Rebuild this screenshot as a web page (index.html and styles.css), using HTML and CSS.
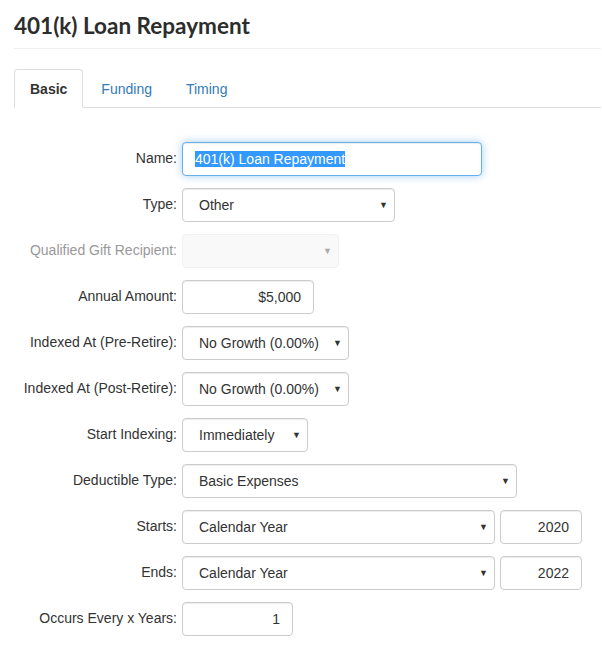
FILE: index.html
```html
<!doctype html>
<html lang="en">
  <head>
    <meta charset="UTF-8" />
    <title>401(k) Loan Repayment</title>
    <link rel="stylesheet" href="styles.css">
  </head>
  <body>
    <div class="page">
      <h1 class="page-title">401(k) Loan Repayment</h1>

      <ul class="nav-tabs">
        <li class="active"><a href="#">Basic</a></li>
        <li><a href="#">Funding</a></li>
        <li><a href="#">Timing</a></li>
      </ul>

      <form class="expense-form">
        <label class="form-label" for="name">Name:</label>
        <div class="form-field">
          <div class="form-control is-focused w-name" id="name"><span class="selected">401(k) Loan Repayment</span></div>
        </div>

        <label class="form-label" for="type">Type:</label>
        <div class="form-field">
          <span class="select-wrap w-type">
            <select class="form-control" id="type"><option>Other</option></select>
          </span>
        </div>

        <label class="form-label is-disabled" for="recipient">Qualified Gift Recipient:</label>
        <div class="form-field">
          <span class="select-wrap is-disabled w-recipient">
            <select class="form-control" id="recipient" disabled><option></option></select>
          </span>
        </div>

        <label class="form-label" for="amount">Annual Amount:</label>
        <div class="form-field">
          <input class="form-control text-right w-amount" id="amount" type="text" value="$5,000">
        </div>

        <label class="form-label" for="preRetire">Indexed At (Pre-Retire):</label>
        <div class="form-field">
          <span class="select-wrap w-growth">
            <select class="form-control" id="preRetire"><option>No Growth (0.00%)</option></select>
          </span>
        </div>

        <label class="form-label" for="postRetire">Indexed At (Post-Retire):</label>
        <div class="form-field">
          <span class="select-wrap w-growth">
            <select class="form-control" id="postRetire"><option>No Growth (0.00%)</option></select>
          </span>
        </div>

        <label class="form-label" for="startIndexing">Start Indexing:</label>
        <div class="form-field">
          <span class="select-wrap w-indexing">
            <select class="form-control" id="startIndexing"><option>Immediately</option></select>
          </span>
        </div>

        <label class="form-label" for="deductible">Deductible Type:</label>
        <div class="form-field">
          <span class="select-wrap w-deductible">
            <select class="form-control" id="deductible"><option>Basic Expenses</option></select>
          </span>
        </div>

        <label class="form-label" for="starts">Starts:</label>
        <div class="form-field">
          <span class="select-wrap w-period">
            <select class="form-control" id="starts"><option>Calendar Year</option></select>
          </span>
          <input class="form-control text-right w-year" type="text" value="2020" aria-label="Start year">
        </div>

        <label class="form-label" for="ends">Ends:</label>
        <div class="form-field">
          <span class="select-wrap w-period">
            <select class="form-control" id="ends"><option>Calendar Year</option></select>
          </span>
          <input class="form-control text-right w-year" type="text" value="2022" aria-label="End year">
        </div>

        <label class="form-label" for="every">Occurs Every x Years:</label>
        <div class="form-field">
          <input class="form-control text-right w-every" id="every" type="text" value="1">
        </div>
      </form>
    </div>
  </body>
</html>
```

FILE: styles.css
```css
:root {
  --text-color: #333;
  --link-color: #337ab7;
  --border-color: #ccc;
  --muted-color: #999;
}

* {
  margin: 0;
  padding: 0;
  box-sizing: border-box;
}

body {
  font-family: "Liberation Sans", Arial, sans-serif;
  font-size: 14px;
  line-height: 1.42857;
  color: var(--text-color);
  background: #fff;
}

.page {
  padding: 0 1px 0 14px;
}

.page-title {
  font-family: Lato, "Open Sans", sans-serif;
  font-size: 22.5px;
  font-weight: 700;
  line-height: 26px;
  color: #2d2d2d;
  padding: 13px 0 9px;
  border-bottom: 1px solid #eee;
}

/* tabs */
.nav-tabs {
  list-style: none;
  display: flex;
  margin-top: 20px;
  border-bottom: 1px solid #ddd;
}

.nav-tabs li {
  margin: 0 2px -1px 0;
}

.nav-tabs a {
  display: block;
  padding: 9px 15px 8px;
  line-height: 20px;
  color: var(--link-color);
  text-decoration: none;
  border: 1px solid transparent;
  border-radius: 4px 4px 0 0;
}

.nav-tabs .active a {
  color: #333;
  font-weight: 700;
  background: #fff;
  border-color: #ddd #ddd transparent;
}

/* form */
.expense-form {
  display: grid;
  grid-template-columns: 163px auto;
  column-gap: 5px;
  row-gap: 12px;
  align-items: center;
  padding-top: 34px;
}

.form-label {
  text-align: right;
  white-space: nowrap;
}

.form-label.is-disabled {
  color: var(--muted-color);
}

.form-field {
  display: flex;
  gap: 5px;
}

.form-control {
  display: block;
  height: 34px;
  padding: 6px 12px;
  font-family: inherit;
  font-size: 14px;
  line-height: 20px;
  color: #333;
  background: #fff;
  border: 1px solid var(--border-color);
  border-radius: 4px;
  box-shadow: inset 0 1px 1px rgba(0, 0, 0, 0.075);
  outline: none;
}

.form-control.is-focused {
  border-color: #66afe9;
  box-shadow: inset 0 1px 1px rgba(0, 0, 0, 0.075), 0 0 8px rgba(102, 175, 233, 0.6);
}

.selected {
  background: #3399ff;
  color: #fff;
}

.text-right {
  text-align: right;
}

.select-wrap {
  position: relative;
  display: block;
}

.select-wrap select {
  width: 100%;
  padding-left: 16px;
  appearance: none;
  -webkit-appearance: none;
}

.select-wrap::after {
  content: "\25BC";
  position: absolute;
  right: 7px;
  top: 12px;
  font-size: 9px;
  line-height: 10px;
  color: #333;
  pointer-events: none;
}

.select-wrap.is-disabled select {
  background: #f7f7f7;
  border-color: #ececec;
  box-shadow: none;
}

.select-wrap.is-disabled::after {
  color: #aaa;
}

.w-name { width: 300px; }
.w-type { width: 213px; }
.w-recipient { width: 157px; }
.w-amount { width: 132px; }
.w-growth { width: 167px; }
.w-indexing { width: 126px; }
.w-deductible { width: 335px; }
.w-period { width: 313px; }
.w-year { width: 82px; }
.w-every { width: 111px; }
```
